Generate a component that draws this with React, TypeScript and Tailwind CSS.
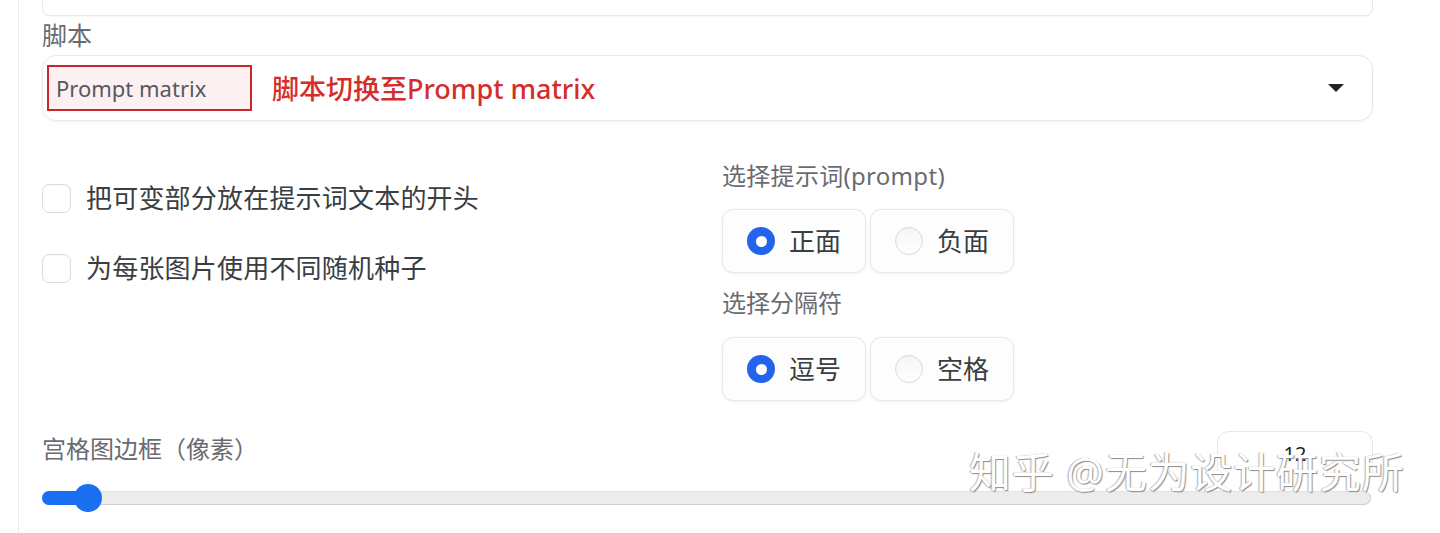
const font = { fontFamily: "'Noto Sans', 'Noto Sans CJK SC', sans-serif" };

function Checkbox({ label }: { label: string }) {
  return (
    <div className="flex items-center h-[40px]">
      <span className="w-[29px] h-[29px] rounded-[7px] border border-[#d9dce1] bg-white shadow-[inset_0_1px_2px_rgba(0,0,0,0.04)]" />
      <span className="ml-[15px] text-[26px] leading-none text-[#3a3d42] tracking-[0.2px]">{label}</span>
    </div>
  );
}

function Radio({ label, checked }: { label: string; checked?: boolean }) {
  return (
    <div className="flex items-center w-[144px] h-[64px] pl-[24px] rounded-[11px] border border-[#e6e8eb] bg-[#fdfdfd] shadow-[0_1px_3px_rgba(0,0,0,0.06)]">
      {checked ? (
        <span className="w-[28px] h-[28px] rounded-full bg-[#2463eb] flex items-center justify-center">
          <span className="w-[11px] h-[11px] rounded-full bg-white" />
        </span>
      ) : (
        <span className="w-[28px] h-[28px] rounded-full border border-[#d5d8dd] bg-gradient-to-b from-[#f4f5f7] to-white" />
      )}
      <span className="ml-[14px] text-[26px] leading-none text-[#3a3d42]">{label}</span>
    </div>
  );
}

export default function App() {
  return (
    <div className="w-[1440px] h-[533px] bg-white overflow-hidden relative" style={font}>
      <div className="ml-[18px] h-full border-l border-[#ebedf0] pl-[23px] pr-[67px]">
        {/* bottom of previous textbox */}
        <div className="h-[16px] border border-t-0 border-[#e6e8eb] rounded-b-[8px] shadow-[0_1px_2px_rgba(0,0,0,0.04)]" />

        <div className="mt-[4px] h-[30px] text-[25px] leading-[30px] text-[#686c72]">脚本</div>

        {/* script dropdown */}
        <div className="mt-[5px] h-[66px] rounded-[14px] border border-[#e6e8eb] shadow-[0_1px_3px_rgba(0,0,0,0.05)] flex items-center pl-[4px] pr-[28px]">
          <div className="w-[205px] h-[46px] border-2 border-[#c8262c] bg-[#fdf0f0] flex items-center pl-[7px] text-[22px] text-[#55595f]">
            Prompt matrix
          </div>
          <span className="ml-[20px] text-[27px] font-medium text-[#d52d2a] leading-none">脚本切换至Prompt matrix</span>
          <span className="ml-auto w-0 h-0 border-l-[8px] border-r-[8px] border-t-[8px] border-l-transparent border-r-transparent border-t-[#222]" />
        </div>

        {/* options */}
        <div className="flex mt-[40px]">
          <div className="w-[680px] pt-[17px] flex flex-col gap-[30px]">
            <Checkbox label="把可变部分放在提示词文本的开头" />
            <Checkbox label="为每张图片使用不同随机种子" />
          </div>
          <div className="flex flex-col">
            <div className="h-[30px] text-[24px] leading-[30px] text-[#686c72] tracking-[0.3px]">选择提示词(prompt)</div>
            <div className="flex gap-[4px] mt-[18px]">
              <Radio label="正面" checked />
              <Radio label="负面" />
            </div>
            <div className="mt-[15px] h-[30px] text-[24px] leading-[30px] text-[#686c72]">选择分隔符</div>
            <div className="flex gap-[4px] mt-[19px]">
              <Radio label="逗号" checked />
              <Radio label="空格" />
            </div>
          </div>
        </div>

        {/* slider */}
        <div className="mt-[30px] flex items-start justify-between">
          <div className="mt-[3px] text-[24px] leading-[30px] text-[#686c72]">宫格图边框（像素）</div>
          <div className="w-[156px] h-[42px] rounded-t-[12px] border border-b-0 border-[#e6e8eb] flex justify-center pt-[12px] text-[20px] leading-none text-[#222]">
            12
          </div>
        </div>
        <div className="mt-[11px] relative h-[28px] flex items-center pr-[2px]">
          <div className="w-full h-[14px] rounded-full bg-[#ececec] border border-[#cfcfcf] border-t-[#e2e2e2]" />
          <div className="absolute left-0 top-[7px] w-[46px] h-[14px] rounded-full bg-[#1a6ff0]" />
          <div className="absolute left-[32px] top-0 w-[28px] h-[28px] rounded-full bg-[#1a6ff0]" />
        </div>
      </div>

      {/* watermark */}
      <div className="absolute left-[969px] top-[451px] text-[42px] leading-none text-white tracking-[0.8px] [text-shadow:1px_1px_1px_#8a8a8a,-1px_0_1px_#b0b0b0]">
        知乎 @无为设计研究所
      </div>
    </div>
  );
}
